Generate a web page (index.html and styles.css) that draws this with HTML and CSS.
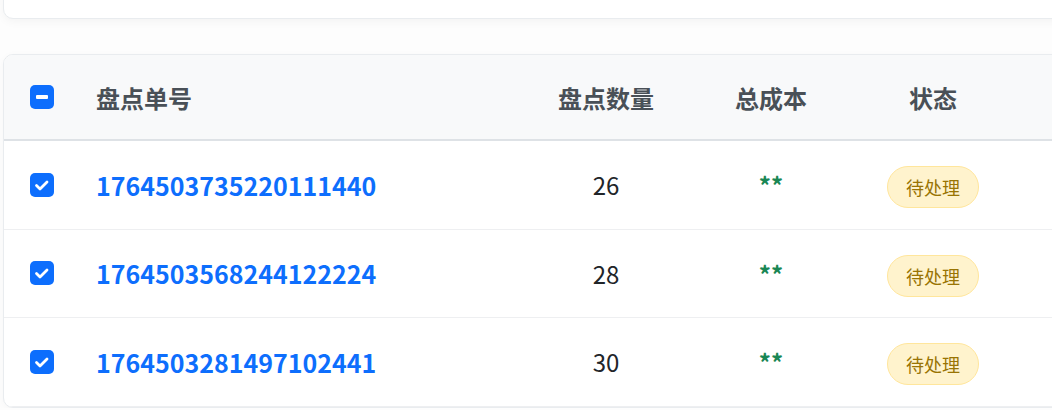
FILE: index.html
```html
<!DOCTYPE html>
<html lang="zh-CN">
<head>
<meta charset="utf-8">
<title>盘点单列表</title>
<link rel="stylesheet" href="styles.css">
</head>
<body>
<div class="page">
  <div class="top-card"></div>
  <div class="table-card">
    <table class="grid">
      <colgroup>
        <col class="c-check">
        <col class="c-no">
        <col class="c-qty">
        <col class="c-cost">
        <col class="c-status">
        <col class="c-rest">
      </colgroup>
      <thead>
        <tr>
          <th class="cell-check"><span class="cb cb-ind"><svg viewBox="0 0 24 24" width="24" height="24"><rect x="6" y="10" width="12" height="4" rx="1" fill="#fff"/></svg></span></th>
          <th class="left">盘点单号</th>
          <th>盘点数量</th>
          <th>总成本</th>
          <th>状态</th>
          <th></th>
        </tr>
      </thead>
      <tbody>
        <tr>
          <td class="cell-check"><span class="cb"><svg viewBox="0 0 24 24" width="24" height="24"><path d="M6.5 12.5l3.5 3.5l7-7" fill="none" stroke="#fff" stroke-width="2.8" stroke-linecap="round" stroke-linejoin="round"/></svg></span></td>
          <td class="left"><a class="order" href="#">1764503735220111440</a></td>
          <td class="num">26</td>
          <td class="cost">**</td>
          <td><span class="badge">待处理</span></td>
          <td></td>
        </tr>
        <tr>
          <td class="cell-check"><span class="cb"><svg viewBox="0 0 24 24" width="24" height="24"><path d="M6.5 12.5l3.5 3.5l7-7" fill="none" stroke="#fff" stroke-width="2.8" stroke-linecap="round" stroke-linejoin="round"/></svg></span></td>
          <td class="left"><a class="order" href="#">1764503568244122224</a></td>
          <td class="num">28</td>
          <td class="cost">**</td>
          <td><span class="badge">待处理</span></td>
          <td></td>
        </tr>
        <tr>
          <td class="cell-check"><span class="cb"><svg viewBox="0 0 24 24" width="24" height="24"><path d="M6.5 12.5l3.5 3.5l7-7" fill="none" stroke="#fff" stroke-width="2.8" stroke-linecap="round" stroke-linejoin="round"/></svg></span></td>
          <td class="left"><a class="order" href="#">1764503281497102441</a></td>
          <td class="num">30</td>
          <td class="cost">**</td>
          <td><span class="badge">待处理</span></td>
          <td></td>
        </tr>
      </tbody>
    </table>
  </div>
</div>
</body>
</html>
```
FILE: styles.css
```css
html, body {
  margin: 0;
  padding: 0;
  background: #fdfdfd;
  overflow: hidden;
}
body {
  font-family: "Noto Sans CJK SC", "Noto Sans", sans-serif;
  color: #212529;
}
.page {
  padding: 0 0 0 3px;
  width: 1120px;
}
.top-card {
  height: 60px;
  margin-top: -43px;
  background: #fff;
  border: 1px solid #e9ecef;
  border-radius: 10px;
  box-shadow: 0 3px 10px rgba(0, 0, 0, 0.04);
}
.table-card {
  margin-top: 35px;
  background: #fff;
  border: 1px solid #e9ecef;
  border-radius: 10px;
  overflow: hidden;
  box-shadow: 0 2px 8px rgba(0, 0, 0, 0.03);
}
.grid {
  width: 100%;
  border-collapse: collapse;
  table-layout: fixed;
}
.c-check { width: 70px; }
.c-no { width: 457px; }
.c-qty { width: 150px; }
.c-cost { width: 180px; }
.c-status { width: 144px; }
.grid th {
  background: #f8f9fa;
  height: 84px;
  padding: 0;
  font-size: 24px;
  font-weight: 700;
  color: #495057;
  text-align: center;
  border-bottom: 2px solid #dee2e6;
  vertical-align: middle;
}
.grid td {
  height: 87.5px;
  padding: 0;
  text-align: center;
  vertical-align: middle;
  border-bottom: 1px solid #eeeff1;
  font-size: 24px;
}
.grid .left {
  text-align: left;
  padding-left: 22px;
}
.grid .cell-check {
  text-align: left;
  padding-left: 26px;
}
.cb {
  display: block;
  width: 24px;
  height: 24px;
  border-radius: 5px;
  background: #0d6efd;
}
.cb svg { display: block; }
.order {
  color: #0d6efd;
  font-weight: 700;
  text-decoration: none;
  font-size: 25px;
}
.num {
  color: #212529;
}
.cost {
  color: #198754;
  font-weight: 700;
  font-size: 21px;
}
.badge {
  display: inline-block;
  box-sizing: border-box;
  width: 92px;
  height: 42px;
  line-height: 40px;
  margin-top: 5px;
  border-radius: 21px;
  background: #fff3cd;
  border: 1px solid #ffe69c;
  color: #997404;
  font-size: 18px;
}
```
